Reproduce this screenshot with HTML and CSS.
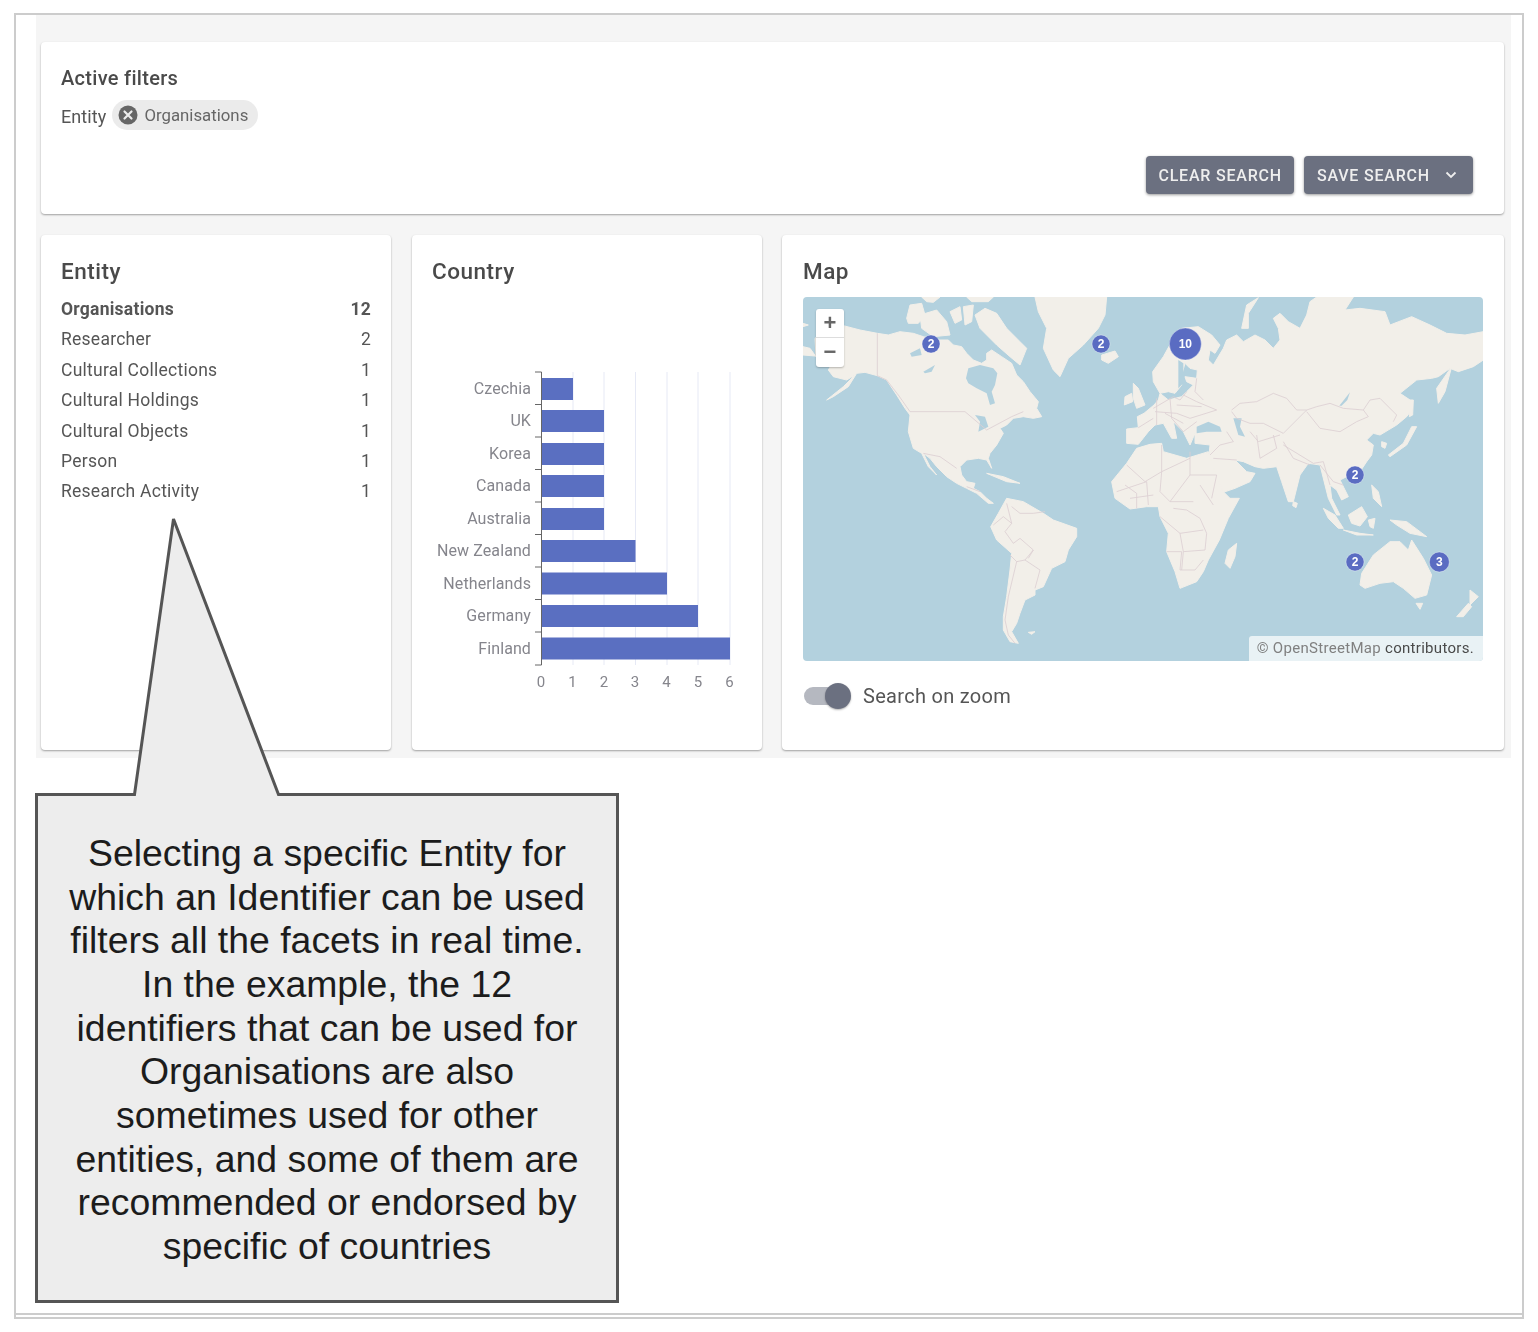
FILE: index.html
```html
<!DOCTYPE html>
<html lang="en">
<head>
  <meta charset="UTF-8">
  <title>Identifier search</title>
  <link rel="stylesheet" href="styles.css">
</head>
<body>

  <div class="frame">
    <div class="panel">

      <section class="card filters">
        <h2 class="filters-title">Active filters</h2>
        <div class="filter-row">
          <span class="filter-label">Entity</span>
          <span class="chip">
            <svg class="chip-icon" viewBox="0 0 20 20">
              <circle cx="10" cy="10" r="9.5" fill="#666"/>
              <path d="M6.5 6.5l7 7M13.5 6.5l-7 7" stroke="#ececec" stroke-width="2.2" stroke-linecap="round"/>
            </svg>
            Organisations
          </span>
        </div>
        <div class="filter-actions">
          <button class="btn btn-clear">Clear search</button>
          <button class="btn btn-save">
            Save search
            <svg class="btn-chevron" viewBox="0 0 12 8">
              <path d="M1.5 1.5L6 6l4.5-4.5" fill="none" stroke="#eee" stroke-width="1.8"/>
            </svg>
          </button>
        </div>
      </section>

      <div class="facets">
        <section class="card facet">
          <h2 class="facet-title">Entity</h2>
          <ul class="entity-list">
            <li class="entity-row entity-active"><span>Organisations</span><span>12</span></li>
            <li class="entity-row"><span>Researcher</span><span>2</span></li>
            <li class="entity-row"><span>Cultural Collections</span><span>1</span></li>
            <li class="entity-row"><span>Cultural Holdings</span><span>1</span></li>
            <li class="entity-row"><span>Cultural Objects</span><span>1</span></li>
            <li class="entity-row"><span>Person</span><span>1</span></li>
            <li class="entity-row"><span>Research Activity</span><span>1</span></li>
          </ul>
        </section>

        <section class="card facet facet-chart">
          <h2 class="facet-title facet-title-chart">Country</h2>
          <svg class="chart" viewBox="412 360 350 340">
            <g class="chart-grid">
              <path d="M573 372V665M604 372V665M635.5 372V665M667 372V665M698 372V665M730 372V665"/>
            </g>
            <g class="chart-bars">
              <rect x="541.5" y="378" width="31.5" height="22"/>
              <rect x="541.5" y="410" width="62.5" height="22"/>
              <rect x="541.5" y="443" width="62.5" height="22"/>
              <rect x="541.5" y="475" width="62.5" height="22"/>
              <rect x="541.5" y="508" width="62.5" height="22"/>
              <rect x="541.5" y="540" width="94" height="22"/>
              <rect x="541.5" y="572.5" width="125.5" height="22"/>
              <rect x="541.5" y="605" width="156.5" height="22"/>
              <rect x="541.5" y="637.5" width="188.5" height="22"/>
            </g>
            <path class="chart-axis" d="M541.5 372V665M535 372h6.500M535 404.500h6.500M535 437h6.500M535 469.500h6.500M535 502h6.500M535 534.500h6.500M535 567h6.500M535 599.500h6.500M535 632h6.500M535 665h6.500"/>
            <g class="chart-labels">
              <text x="531" y="393.500">Czechia</text>
              <text x="531" y="426">UK</text>
              <text x="531" y="458.500">Korea</text>
              <text x="531" y="491">Canada</text>
              <text x="531" y="523.500">Australia</text>
              <text x="531" y="556">New Zealand</text>
              <text x="531" y="588.500">Netherlands</text>
              <text x="531" y="621">Germany</text>
              <text x="531" y="653.500">Finland</text>
            </g>
            <g class="chart-ticks">
              <text x="541" y="687">0</text>
              <text x="572.500" y="687">1</text>
              <text x="604" y="687">2</text>
              <text x="635" y="687">3</text>
              <text x="666.500" y="687">4</text>
              <text x="698" y="687">5</text>
              <text x="729.500" y="687">6</text>
            </g>
          </svg>
        </section>

        <section class="card facet facet-map">
          <h2 class="facet-title">Map</h2>
          <div class="map">
            <svg class="map-svg" viewBox="39 36 2040 1092" preserveAspectRatio="none">
              <rect class="map-water" x="39" y="36" width="2040" height="1092"/>

              <g class="map-land">
                <path d="M39 185L60 190L78 215L75 160L120 125L160 122L210 135L262 145L295 150L330 140L370 145L400 155L440 165L475 165L490 180L515 185L530 205L550 225L575 235L590 225L590 205L605 195L635 215L665 235L680 270L700 290L720 320L745 350L740 370L755 395L730 400L700 395L670 400L650 420L630 430L640 445L620 480L600 505L595 520L605 550L590 525L565 520L530 525L510 545L515 570L530 590L555 595L550 610L570 620L590 640L610 655L595 655L560 625L530 610L500 595L470 575L440 545L420 520L400 505L420 545L440 570L415 545L395 505L370 490L355 440L360 390L345 370L320 330L290 285L262 272L225 262L200 265L175 305L130 335L110 345L160 305L195 270L170 285L130 275L115 255L130 230L100 215L39 210Z"/>
                <path d="M555 90L585 70L620 85L650 130L690 170L710 190L690 240L660 215L620 180L590 150L570 130Z"/>
                <path d="M350 100L360 60L395 55L405 90L385 115L355 115Z"/>
                <path d="M390 90L440 75L470 110L480 150L430 155L395 130Z"/>
                <path d="M480 80L510 65L515 105L495 115Z"/>
                <path d="M520 65L550 60L545 110L525 120Z"/>
                <path d="M395 36H450L430 52L410 50Z"/>
                <path d="M530 36H610L595 50H545Z"/>
                <path d="M735 36H950L945 90L925 130L880 180L835 220L810 275L790 255L760 190L770 130L745 80Z"/>
                <path d="M935 210L975 198L985 215L955 235L935 225Z"/>
                <path d="M1030 295L1045 310L1065 360L1040 370L1030 340Z"/>
                <path d="M1005 335L1025 325L1028 350L1003 360Z"/>
                <path d="M590 565L640 575L690 595L650 590Z"/>
                <path d="M39 115L55 120L39 125Z"/>

                <g transform="translate(1050 0)">
                  <path d="M-40 432L-5 428L-8 395L12 385L42 360L55 345L60 325L85 345L125 335L140 320L160 300L140 290L135 275L170 280L172 255L150 250L135 235L125 270L125 300L105 325L85 320L60 325L40 290L38 260L70 215L95 170L125 130L175 125L215 150L240 180L225 205L210 195L205 225L220 240L250 190L260 165L290 150L310 170L345 150L375 165L400 190L420 165L415 130L400 100L420 85L445 110L480 130L500 90L510 50L530 36H640L615 75L660 70L735 80L750 120L815 95L870 120L920 145L975 150L1030 140V225L1000 245L955 260L930 250L895 275L875 280L830 285L780 325L810 345L815 375L800 395L770 420L745 435L720 450L700 445L680 465L700 480L695 510L680 530L660 560L640 572L620 575L600 585L625 635L605 645L590 615L570 600L575 640L600 690L590 690L565 640L555 600L540 540L505 535L480 570L460 650L445 650L425 590L410 545L370 550L345 545L310 530L285 525L320 560L345 565L330 590L285 610L250 622L225 580L205 530L210 480L165 475L165 445L150 480L130 440L100 410L110 460L95 460L70 415L45 420L25 440L-5 478L-40 475Z"/>
                  <path d="M-10 490L30 478L65 475L70 500L105 510L140 520L205 500L215 535L250 620L270 640L298 640L265 700L238 765L205 825L190 860L170 890L120 910L105 860L80 800L85 745L60 695L55 665L20 665L-30 672L-75 640L-85 590L-40 535Z"/>
                  <path d="M305 130L320 60L355 38L325 85L325 130Z"/>
                  <path d="M895 355L890 310L935 245L915 320Z"/>
                  <path d="M810 345L820 345L818 390L808 395Z"/>
                  <path d="M745 510L790 475L815 425L830 425L800 480L750 515Z"/>
                  <path d="M460 650L472 655L468 668L458 662Z"/>
                  <path d="M695 600L715 620L725 665L700 640Z"/>
                  <path d="M725 470L740 475L735 490L725 485Z"/>
                  <path class="map-lake" d="M170 425L205 410L240 425L245 440L200 440L170 445Z"/>
                  <path class="map-lake" d="M280 400L305 400L300 425L315 455L295 450Z"/>
                  <path class="map-lake" d="M598 362L630 322L622 345L605 362Z"/>
                  <path class="map-lake" d="M115 225L130 235L130 295L115 310Z"/>
                </g>

                <g transform="translate(0 645)">
                  <path d="M605 75L625 40L650 -5L700 5L760 40L790 60L860 85L860 110L835 150L825 185L785 205L760 260L735 270L735 285L705 300L690 340L680 370L665 395L685 430L660 425L640 390L640 350L650 290L660 210L665 160L620 120L602 80Z"/>
                  <path d="M715 397L735 395L725 403Z"/>
                </g>

                <g transform="translate(1050 645)">
                  <path d="M255 190L265 150L290 130L285 170L270 205Z"/>
                  <path d="M660 255L665 220L700 165L750 125L780 125L805 150L815 120L850 175L875 225L860 285L825 295L790 265L760 245L720 250L675 265Z"/>
                  <path d="M828 310L848 310L840 328Z"/>
                  <path d="M950 350L985 310L995 320L970 350Z"/>
                  <path d="M990 270L1015 290L990 315Z"/>
                  <path d="M550 25L585 45L610 85L595 85L565 55Z"/>
                  <path d="M610 90L660 100L700 105L650 105Z"/>
                  <path d="M625 45L665 20L682 50L660 78L635 70Z"/>
                  <path d="M685 60L705 55L700 85L690 80Z"/>
                  <path d="M750 60L800 65L860 110L810 100L770 75Z"/>
                </g>
              </g>

              <path class="map-lake" d="M528 280L535 250L570 240L610 250L622 265L615 300L605 320L615 355L600 360L590 325L560 310L535 295Z"/>
              <path class="map-lake" d="M360 205L390 190L395 210L365 215Z"/>
              <path class="map-lake" d="M400 260L435 240L425 260L405 265Z"/>
              <path class="map-lake" d="M555 390L585 395L595 425L565 440L570 410Z"/>

              <g class="map-borders">
                <path d="M262 145V272L290 285L325 330L360 380H525L590 435L665 395L700 380"/>
                <path d="M400 505L450 515L500 550M530 605L570 620"/>
                <g transform="translate(1050 0)">
                  <path d="M275 375L300 355L350 350L400 325L440 340L470 375L500 375L530 365L570 355L610 370L670 375L690 345L720 340L770 390L760 410"/>
                  <path d="M500 380L540 430L600 440L650 410L685 395L670 375"/>
                  <path d="M275 380L290 400L330 415L370 415L430 445L490 385L500 375"/>
                  <path d="M430 470L460 520L510 540M400 450L410 490L360 520L350 450M260 440L280 470L240 480L210 510"/>
                  <path d="M430 480L520 535L550 530L570 600M220 520L290 525M330 440L355 470L420 450M540 540L580 590L610 600"/>
                  <path d="M40 370L100 335L120 345L140 320M45 380L110 385L150 400L230 375M90 340L95 400L130 440L170 410M130 330L170 350L230 375M50 340V420M-5 428L40 400M75 385L130 415M110 360L185 365M170 280L165 320L190 345"/>
                  <path d="M65 480V560L150 520M150 500V570H230M-40 540L15 590L65 560L60 620L90 650L150 570M-70 620L20 590M90 650H160M180 600L220 660M-30 640L40 630M230 570L215 640M20 590L25 660M-45 600L-10 625L-10 670"/>
                </g>
                <g transform="translate(0 645)">
                  <path d="M610 75L640 50L665 70L645 95L670 130L690 115L730 150L705 180L680 185L655 290L645 360L655 405L675 430M705 180L750 210L735 265M730 150L715 175M665 20L690 40H730L765 35M650 10L665 70M680 185L660 165"/>
                </g>
                <g transform="translate(1050 645)">
                  <path d="M60 50L120 100L130 155L195 150L200 100L180 55M80 155H125L120 210H165L190 180M130 155L125 210M120 100L190 90M100 25L140 30L180 55"/>
                </g>
              </g>

              <g class="map-markers">
                <circle cx="423" cy="177" r="27"/>
                <text x="423" y="189">2</text>
                <circle cx="933" cy="177" r="27"/>
                <text x="933" y="189">2</text>
                <circle cx="1186" cy="177" r="48"/>
                <text x="1186" y="189">10</text>
                <circle cx="1695" cy="570" r="27"/>
                <text x="1695" y="582">2</text>
                <circle cx="1695" cy="831" r="27"/>
                <text x="1695" y="843">2</text>
                <circle cx="1948" cy="831" r="30"/>
                <text x="1948" y="843">3</text>
              </g>
            </svg>

            <div class="zoom-control">
              <span class="zoom-btn">+</span>
              <span class="zoom-btn">−</span>
            </div>
            <div class="attribution">© OpenStreetMap <span class="attribution-dark">contributors.</span></div>
          </div>
          <div class="map-toggle">
            <span class="switch"><span class="switch-thumb"></span></span>
            Search on zoom
          </div>
        </section>
      </div>

    </div>

    <div class="bottom-rule"></div>

    <div class="callout">
      <svg class="callout-shape" viewBox="34 517 586 787">
        <polygon points="35.500,794.500 133.500,794.500 172.500,519 277.500,794.500 616.500,794.500 616.500,1301.500 35.500,1301.500"/>
      </svg>
      <p class="callout-text">Selecting a specific Entity for<br>which an Identifier can be used<br>filters all the facets in real time.<br>In the example, the 12<br>identifiers that can be used for<br>Organisations are also<br>sometimes used for other<br>entities, and some of them are<br>recommended or endorsed by<br>specific of countries</p>
    </div>
  </div>

</body>
</html>
```

FILE: styles.css
```css
body {
  margin: 0;
  background-color: #fff;
  font-family: Roboto, "Liberation Sans", sans-serif;
  color: #555;
}
.frame {
  position: relative;
  box-sizing: border-box;
  display: flex;
  flex-direction: column;
  width: 1510px;
  height: 1306px;
  margin: 13px 0 0 14px;
  border: 2px solid #ccc;
}
.panel {
  box-sizing: border-box;
  width: 1475px;
  height: 743px;
  margin-left: 20px;
  padding: 27px 7px 0 5px;
  background-color: #f5f5f5;
  filter: blur(0.5px);
}
.bottom-rule {
  height: 2px;
  margin-top: auto;
  margin-bottom: 2px;
  background-color: #ccc;
}
.card {
  box-sizing: border-box;
  background-color: #fff;
  border-radius: 4px;
  box-shadow: 0 1px 2px rgba(0, 0, 0, 0.35);
}

/* active filters */
.filters {
  height: 172px;
  padding: 24px 31px 0 20px;
}
.filters-title {
  margin: 0;
  font-size: 20px;
  line-height: 24px;
  font-weight: 500;
  letter-spacing: 0.3px;
  color: #4a4a4a;
}
.filter-row {
  display: flex;
  align-items: center;
  gap: 6px;
  margin-top: 10px;
}
.filter-label {
  position: relative;
  top: 1px;
  font-size: 18px;
  letter-spacing: 0.1px;
}
.chip {
  display: flex;
  align-items: center;
  gap: 6px;
  height: 30px;
  padding: 0 10px 0 6px;
  border-radius: 15px;
  background-color: #ebebeb;
  font-size: 16.800px;
  color: #666;
}
.chip-icon {
  width: 20px;
  height: 20px;
}
.filter-actions {
  display: flex;
  justify-content: flex-end;
  gap: 10px;
  margin-top: 26px;
}
.btn {
  display: flex;
  align-items: center;
  height: 38px;
  padding: 0 13px;
  border: none;
  border-radius: 4px;
  background-color: #6b7080;
  box-shadow: 0 1px 3px rgba(0, 0, 0, 0.4);
  font-family: Roboto, "Liberation Sans", sans-serif;
  font-size: 16px;
  font-weight: 500;
  letter-spacing: 0.8px;
  text-transform: uppercase;
  color: #eee;
}
.btn-clear {
  padding: 0 12px;
}
.btn-chevron {
  width: 12px;
  height: 8px;
  margin-left: 15px;
  margin-right: 3px;
}

/* facets */
.facets {
  display: flex;
  gap: 20px;
  margin-top: 21px;
}
.facet {
  flex: 0 0 350px;
  min-width: 0;
  height: 515px;
  padding: 20px 20px 0;
}
.facet-chart {
  margin-left: 1px;
}
.facet-map {
  flex: 0 0 722px;
  padding-left: 21px;
}
.facet-title {
  margin: 0;
  font-size: 22.500px;
  line-height: 32px;
  font-weight: 500;
  letter-spacing: 0.5px;
  color: #4a4a4a;
}
.facet-title-chart {
  margin-bottom: 73px;
}
.entity-list {
  margin: 7px 0 0;
  padding: 0;
  list-style: none;
}
.entity-row {
  display: flex;
  justify-content: space-between;
  height: 30.400px;
  font-size: 17.500px;
  line-height: 30px;
  letter-spacing: 0.25px;
}
.entity-active {
  font-weight: 700;
}

/* chart */
.chart {
  display: block;
  width: 350px;
  height: 340px;
  margin: 0 -20px;
}
.chart-grid path {
  fill: none;
  stroke: #e6e9f5;
  stroke-width: 1;
}
.chart-bars rect {
  fill: #5a6fc1;
}
.chart-axis {
  fill: none;
  stroke: #666;
  stroke-width: 1;
}
.chart-labels text {
  font-size: 16px;
  letter-spacing: 0.1px;
  fill: #85858c;
  text-anchor: end;
}
.chart-ticks text {
  font-size: 15px;
  fill: #85858c;
  text-anchor: middle;
}

/* map */
.map {
  position: relative;
  width: 680px;
  height: 364px;
  margin-top: 10px;
  border-radius: 4px;
  overflow: hidden;
}
.map-svg {
  display: block;
  width: 680px;
  height: 364px;
}
.map-water {
  fill: #b3d1de;
}
.map-land {
  fill: #f2efe9;
  stroke: #f2efe9;
  stroke-width: 3;
  stroke-linejoin: round;
}
.map-lake {
  fill: #b3d1de;
  stroke: none;
}
.map-borders {
  fill: none;
  stroke: #dccfd3;
  stroke-width: 2.500;
}
.map-markers circle {
  fill: #5a6cc2;
  stroke: rgba(255, 255, 255, 0.35);
  stroke-width: 3;
}
.map-markers text {
  font-family: "Liberation Sans", sans-serif;
  font-size: 36px;
  font-weight: 700;
  fill: #fff;
  text-anchor: middle;
}
.zoom-control {
  position: absolute;
  top: 12px;
  left: 13px;
  display: flex;
  flex-direction: column;
  width: 28px;
  border-radius: 3px;
  background-color: #fff;
  box-shadow: 0 1px 2px rgba(0, 0, 0, 0.25);
}
.zoom-btn {
  height: 28px;
  font-family: "Liberation Sans", sans-serif;
  font-size: 22px;
  font-weight: 700;
  line-height: 28px;
  text-align: center;
  color: #666;
}
.zoom-btn + .zoom-btn {
  height: 29px;
  border-top: 1px solid #ddd;
}
.attribution {
  position: absolute;
  right: 0;
  bottom: 0;
  height: 25px;
  padding: 0 9px 0 8px;
  border-top-left-radius: 3px;
  background-color: #e9f2f5;
  font-size: 15px;
  line-height: 25px;
  letter-spacing: 0.3px;
  color: #808080;
}
.attribution-dark {
  color: #4a4a4a;
}
.map-toggle {
  display: flex;
  align-items: center;
  gap: 21px;
  margin: 21px 0 0 1px;
  font-size: 20px;
  line-height: 28px;
  letter-spacing: 0.3px;
}
.switch {
  position: relative;
  width: 38px;
  height: 18px;
  border-radius: 9px;
  background-color: #b5b8c0;
}
.switch-thumb {
  position: absolute;
  top: -4px;
  right: -9px;
  width: 26px;
  height: 26px;
  border-radius: 50%;
  background-color: #6b7080;
  box-shadow: 0 1px 2px rgba(0, 0, 0, 0.3);
}

/* callout */
.callout {
  position: absolute;
  top: 502px;
  left: 19px;
  width: 586px;
  height: 787px;
}
.callout-shape {
  position: absolute;
  top: 0;
  left: 0;
  width: 586px;
  height: 787px;
}
.callout-shape polygon {
  fill: #ededed;
  stroke: #555;
  stroke-width: 3;
}
.callout-text {
  position: absolute;
  top: 315px;
  left: -1px;
  width: 586px;
  margin: 0;
  font-family: "Liberation Sans", Arial, sans-serif;
  font-size: 37.400px;
  line-height: 43.670px;
  text-align: center;
  color: #1c1c1c;
}
```
